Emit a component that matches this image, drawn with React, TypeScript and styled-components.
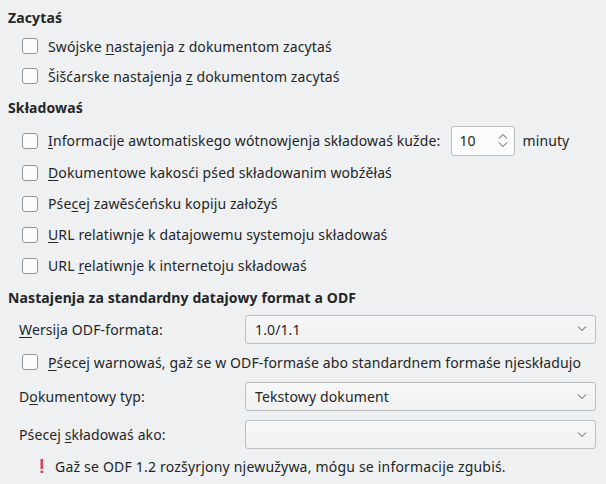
import React from "react";
import styled, { createGlobalStyle } from "styled-components";

const Global = createGlobalStyle`
  html, body { margin: 0; padding: 0; background: #eff0f1; }
  body { font-family: "Noto Sans", "DejaVu Sans", sans-serif; font-size: 14px; letter-spacing: 0.12px; color: #232627; }
  * { box-sizing: border-box; }
`;

const Page = styled.div`
  width: 606px;
  height: 484px;
  padding: 8px 10px 0 8px;
  display: flex;
  flex-direction: column;
`;

const Section = styled.section<{ $mt?: number }>`
  display: flex;
  flex-direction: column;
  margin-top: ${(p) => p.$mt ?? 0}px;
`;

const Header = styled.div`
  font-weight: bold;
  line-height: 20px;
  height: 20px;
`;

const Row = styled.div<{ $h: number; $mt?: number; $indent?: number }>`
  display: flex;
  align-items: center;
  height: ${(p) => p.$h}px;
  margin-top: ${(p) => p.$mt ?? 0}px;
  padding-left: ${(p) => p.$indent ?? 14}px;
  white-space: nowrap;
`;

const Box = styled.span`
  width: 16px;
  height: 16px;
  border: 1px solid #939597;
  border-radius: 3px;
  background: #fcfcfc;
  flex: none;
  margin-right: 10px;
`;

const M = styled.span`
  text-decoration: underline;
  text-underline-offset: 2px;
  text-decoration-thickness: 1px;
`;

const Spin = styled.div`
  width: 64px;
  height: 30px;
  margin: 0 7px 0 11px;
  border: 1px solid #bdbebf;
  border-radius: 3px;
  background: #fcfcfc;
  display: flex;
  align-items: center;
  justify-content: space-between;
  padding: 0 6px 0 7px;
`;

const Grid = styled.div<{ $h: number; $mt?: number }>`
  display: grid;
  grid-template-columns: 226px 1fr;
  align-items: center;
  height: ${(p) => p.$h}px;
  margin-top: ${(p) => p.$mt ?? 0}px;
  padding-left: 11px;
`;

const Combo = styled.div`
  height: 29px;
  border: 1px solid #bcbdbe;
  border-radius: 3px;
  background: linear-gradient(#f7f7f7, #f1f1f1);
  display: flex;
  align-items: center;
  justify-content: space-between;
  padding: 0 8px 0 9px;
`;

const Warn = styled.div`
  display: flex;
  align-items: center;
  height: 26px;
  padding-left: 31px;
  gap: 10px;
  letter-spacing: 0.2px;
`;

const Chevron = ({ up }: { up?: boolean }) => (
  <svg width="10" height="6" viewBox="0 0 10 6">
    <path
      d={up ? "M1 5.5 L5 1.5 L9 5.5" : "M1 0.5 L5 4.5 L9 0.5"}
      fill="none"
      stroke="#4d4f51"
      strokeWidth="1"
    />
  </svg>
);

const SpinArrows = styled.div`
  display: flex;
  flex-direction: column;
  gap: 3px;
`;

const Check = ({ children }: { children: React.ReactNode }) => (
  <>
    <Box />
    <span>{children}</span>
  </>
);

export default function App() {
  return (
    <Page>
      <Global />
      <Section>
        <Header>Zacytaś</Header>
        <Row $h={30} $mt={3}>
          <Check>
            Swójske <M>n</M>astajenja z dokumentom zacytaś
          </Check>
        </Row>
        <Row $h={30}>
          <Check>
            Šišćarske nastajenja <M>z</M> dokumentom zacytaś
          </Check>
        </Row>
      </Section>
      <Section $mt={7}>
        <Header>Składowaś</Header>
        <Row $h={33} $mt={6}>
          <Check>
            <M>I</M>nformacije awtomatiskego wótnowjenja składowaś kužde:
          </Check>
          <Spin>
            <span>10</span>
            <SpinArrows>
              <Chevron up />
              <Chevron />
            </SpinArrows>
          </Spin>
          <span>minuty</span>
        </Row>
        <Row $h={31}>
          <Check>
            <M>D</M>okumentowe kakosći pśed składowanim wobźěłaś
          </Check>
        </Row>
        <Row $h={31}>
          <Check>
            Pśe<M>c</M>ej zawěsćeńsku kopiju załožyś
          </Check>
        </Row>
        <Row $h={31}>
          <Check>
            <M>U</M>RL relatiwnje k datajowemu systemoju składowaś
          </Check>
        </Row>
        <Row $h={31}>
          <Check>
            URL <M>r</M>elatiwnje k internetoju składowaś
          </Check>
        </Row>
      </Section>
      <Section $mt={7}>
        <Header>Nastajenja za standardny datajowy format a ODF</Header>
        <Grid $h={36} $mt={3}>
          <span>
            <M>W</M>ersija ODF-formata:
          </span>
          <Combo>
            <span>1.0/1.1</span>
            <Chevron />
          </Combo>
        </Grid>
        <Row $h={30}>
          <Check>
            <M>P</M>śecej warnowaś, gaž se w ODF-formaśe abo standardnem formaśe njeskładujo
          </Check>
        </Row>
        <Grid $h={39}>
          <span>
            D<M>o</M>kumentowy typ:
          </span>
          <Combo>
            <span>Tekstowy dokument</span>
            <Chevron />
          </Combo>
        </Grid>
        <Grid $h={37}>
          <span>
            Pśecej <M>s</M>kładowaś ako:
          </span>
          <Combo>
            <span />
            <Chevron />
          </Combo>
        </Grid>
        <Warn>
          <svg width="6" height="16" viewBox="0 0 6 16">
            <rect x="1.5" y="1" width="2.5" height="10" fill="#da4453" />
            <rect x="1.5" y="12.5" width="2.5" height="2.5" fill="#da4453" />
          </svg>
          <span>Gaž se ODF 1.2 rozšyrjony njewužywa, mógu se informacije zgubiś.</span>
        </Warn>
      </Section>
    </Page>
  );
}
